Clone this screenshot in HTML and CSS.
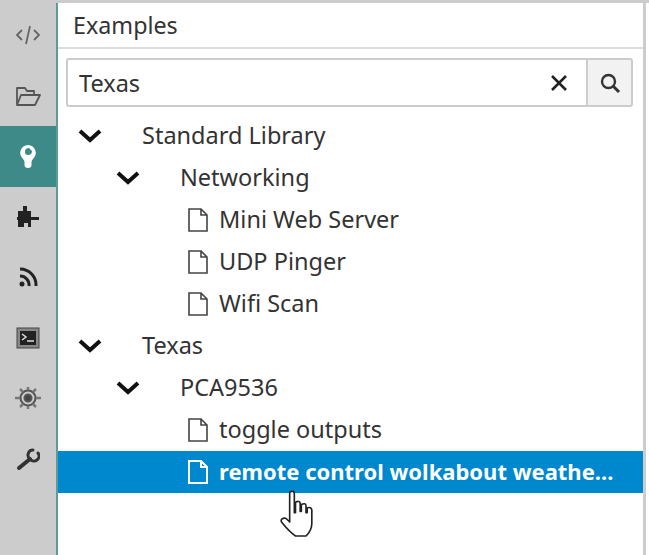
FILE: index.html
```html
<!DOCTYPE html>
<html>
<head>
    <title>Examples</title>
    <link rel="stylesheet" href="styles.css">
</head>
<body>
<div class="app">
    <div class="sidebar">
        <div class="tab">
            <svg width="28" height="24" viewBox="0 0 28 24" fill="none" stroke="#666" stroke-width="1.800"><path d="M8 7l-5 5 5 5M20 7l5 5-5 5M16 3l-4 18"/></svg>
        </div>
        <div class="tab">
            <svg width="28" height="24" viewBox="0 0 28 24" fill="none" stroke="#555" stroke-width="1.800" stroke-linejoin="round"><path d="M3 21V4h8l2 3h7v4M3 21l4-10h19l-5 10z"/></svg>
        </div>
        <div class="tab active">
            <svg width="18" height="24" viewBox="0 0 18 24"><path d="M9 1a8 8 0 0 0-5 14c1 1 1.500 2 1.500 3v3a3.500 3 0 0 0 7 0v-3c0-1 .5-2 1.500-3a8 8 0 0 0-5-14z" fill="#fff"/><path d="M10 4a4 4 0 0 0-4 4c0 2 1 3 3 3s4-1 4-4z" fill="#3d8a88"/></svg>
        </div>
        <div class="tab">
            <svg width="24" height="24" viewBox="0 0 24 24" fill="#222"><path d="M7 1h4v5h4v6h8v3h-8v7h-3v-4H8v4H2v-7H1v-3h1V6h5z"/></svg>
        </div>
        <div class="tab">
            <svg width="22" height="22" viewBox="0 0 22 22" fill="none" stroke="#222" stroke-width="3"><circle cx="5" cy="18" r="2.500" fill="#222" stroke="none"/><path d="M3 10a9 9 0 0 1 9 10M3 3a16 16 0 0 1 16 17"/></svg>
        </div>
        <div class="tab">
            <svg width="24" height="22" viewBox="0 0 24 22"><rect x="1" y="1" width="22" height="20" fill="#888" stroke="#444"/><rect x="4" y="4" width="16" height="14" fill="#222"/><path d="M6 7l4 3-4 3M11 14h7" fill="none" stroke="#ddd" stroke-width="1.500"/></svg>
        </div>
        <div class="tab">
            <svg width="28" height="26" viewBox="0 0 28 26" fill="none" stroke="#555" stroke-width="2"><circle cx="14" cy="13" r="7.500"/><circle cx="14" cy="13" r="3.500" fill="#444"/><path d="M14 2v3M14 21v3M1 13h5M22 13h5M6 4l3 3M22 4l-3 3M6 22l3-3M22 22l-3-3" stroke="#777" stroke-width="2.500"/></svg>
        </div>
        <div class="tab">
            <svg width="24" height="24" viewBox="0 0 24 24" fill="none" stroke="#333" stroke-linecap="round"><path d="M3 21l11-9" stroke-width="4"/><path d="M22 6a5 5 0 0 1-8 6 5 5 0 0 1 3-9" stroke-width="3"/></svg>
        </div>
    </div>
    <div class="panel">
        <div class="panel-title">Examples</div>
        <div class="search">
            <div class="search-box">
                <span class="search-text">Texas</span>
                <svg width="20" height="20" viewBox="0 0 20 20" stroke="#222" stroke-width="2.600"><path d="M3 3l14 14M17 3L3 17"/></svg>
            </div>
            <div class="search-btn">
                <svg width="22" height="22" viewBox="0 0 22 22" fill="none" stroke="#333" stroke-width="2.400"><circle cx="9.500" cy="9.500" r="6.500"/><path d="M14 14l6 6" stroke-width="3"/></svg>
            </div>
        </div>
        <ul class="tree">
            <li class="row level-0">
                <svg class="chev" width="24" height="14" viewBox="0 0 24 14" fill="none" stroke="#111" stroke-width="4"><path d="M2 2l10 9 10-9"/></svg>
                <span class="label">Standard Library</span>
            </li>
            <li class="row level-1">
                <svg class="chev" width="24" height="14" viewBox="0 0 24 14" fill="none" stroke="#111" stroke-width="4"><path d="M2 2l10 9 10-9"/></svg>
                <span class="label">Networking</span>
            </li>
            <li class="row leaf">
                <svg class="file" width="22" height="26" viewBox="0 0 22 26" fill="none" stroke="#444" stroke-width="1.600"><path d="M2 2h12l6 6v16H2zM14 2v6h6"/></svg>
                <span class="label">Mini Web Server</span>
            </li>
            <li class="row leaf">
                <svg class="file" width="22" height="26" viewBox="0 0 22 26" fill="none" stroke="#444" stroke-width="1.600"><path d="M2 2h12l6 6v16H2zM14 2v6h6"/></svg>
                <span class="label">UDP Pinger</span>
            </li>
            <li class="row leaf">
                <svg class="file" width="22" height="26" viewBox="0 0 22 26" fill="none" stroke="#444" stroke-width="1.600"><path d="M2 2h12l6 6v16H2zM14 2v6h6"/></svg>
                <span class="label">Wifi Scan</span>
            </li>
            <li class="row level-0">
                <svg class="chev" width="24" height="14" viewBox="0 0 24 14" fill="none" stroke="#111" stroke-width="4"><path d="M2 2l10 9 10-9"/></svg>
                <span class="label">Texas</span>
            </li>
            <li class="row level-1">
                <svg class="chev" width="24" height="14" viewBox="0 0 24 14" fill="none" stroke="#111" stroke-width="4"><path d="M2 2l10 9 10-9"/></svg>
                <span class="label">PCA9536</span>
            </li>
            <li class="row leaf">
                <svg class="file" width="22" height="26" viewBox="0 0 22 26" fill="none" stroke="#444" stroke-width="1.600"><path d="M2 2h12l6 6v16H2zM14 2v6h6"/></svg>
                <span class="label">toggle outputs</span>
            </li>
            <li class="row leaf selected">
                <svg class="file" width="22" height="26" viewBox="0 0 22 26" fill="#0088ce" stroke="#fff" stroke-width="2"><path d="M2 2h12l6 6v16H2zM14 2v6h6"/></svg>
                <span class="label">remote control wolkabout weathe...</span>
            </li>
        </ul>
        <svg class="cursor" width="42" height="54" viewBox="0 0 36 46" fill="#fff" stroke="#222" stroke-width="1.400" stroke-linejoin="round"><path d="M11 3c2-1 3 0 3 2v16h1v-9c2-1 4-1 4 1v7h1v-6c2-1 4-1 4 1v6h1v-4c2-1 4 0 4 2v11c0 6-3 9-5 11h-9c-3-2-8-7-12-12-1-2 1-4 4-3l3 3V5c0-1 0-2 1-2z"/></svg>
    </div>
</div>
</body>
</html>
```

FILE: styles.css
```css
* {
    box-sizing: border-box;
}
body {
    margin: 0;
    background: #fff;
    font-family: "Noto Sans", "Open Sans", sans-serif;
    color: #333;
    overflow: hidden;
}
.app {
    display: flex;
    width: 649px;
    height: 555px;
    border-top: 3px solid #ccc;
}
.sidebar {
    width: 58px;
    flex-shrink: 0;
    background: #ccc;
    border-right: 2px solid #5f9a98;
    padding-top: 2px;
}
.tab {
    height: 60.500px;
    display: flex;
    align-items: center;
    justify-content: center;
}
.active {
    background: #3d8a88;
}
.panel {
    position: relative;
    flex: 1;
    border-right: 3px solid #ccc;
    margin-right: 3px;
}
.panel-title {
    height: 46px;
    padding: 0 15px;
    line-height: 44px;
    font-size: 23.300px;
    border-bottom: 2px solid #ddd;
}
.search {
    display: flex;
    margin: 9px 10px 0 8px;
    height: 49px;
}
.search-box {
    flex: 1;
    display: flex;
    align-items: center;
    justify-content: space-between;
    padding: 0 17px 0 11px;
    border: 2px solid #ccc;
    border-right: 0;
    border-radius: 3px 0 0 3px;
}
.search-text {
    font-size: 23.500px;
}
.search-btn {
    width: 47px;
    display: flex;
    align-items: center;
    justify-content: center;
    background: #f2f2f2;
    border: 2px solid #ccc;
    border-radius: 0 3px 3px 0;
}
.tree {
    list-style: none;
    margin: 8px 0 0;
    padding: 0;
}
.row {
    position: relative;
    display: flex;
    align-items: center;
    height: 42px;
    font-size: 23.500px;
    white-space: nowrap;
}
.label {
    margin-bottom: 3px;
}
.level-0 {
    padding-left: 20px;
}
.level-1 {
    padding-left: 58px;
}
.leaf {
    padding-left: 129px;
}
.chev {
    margin-right: 40px;
}
.file {
    margin-right: 10px;
}
.selected {
    background: #0088ce;
    color: #fff;
    font-size: 22px;
    font-weight: 700;
}
.cursor {
    position: absolute;
    left: 220px;
    top: 485px;
}
```
